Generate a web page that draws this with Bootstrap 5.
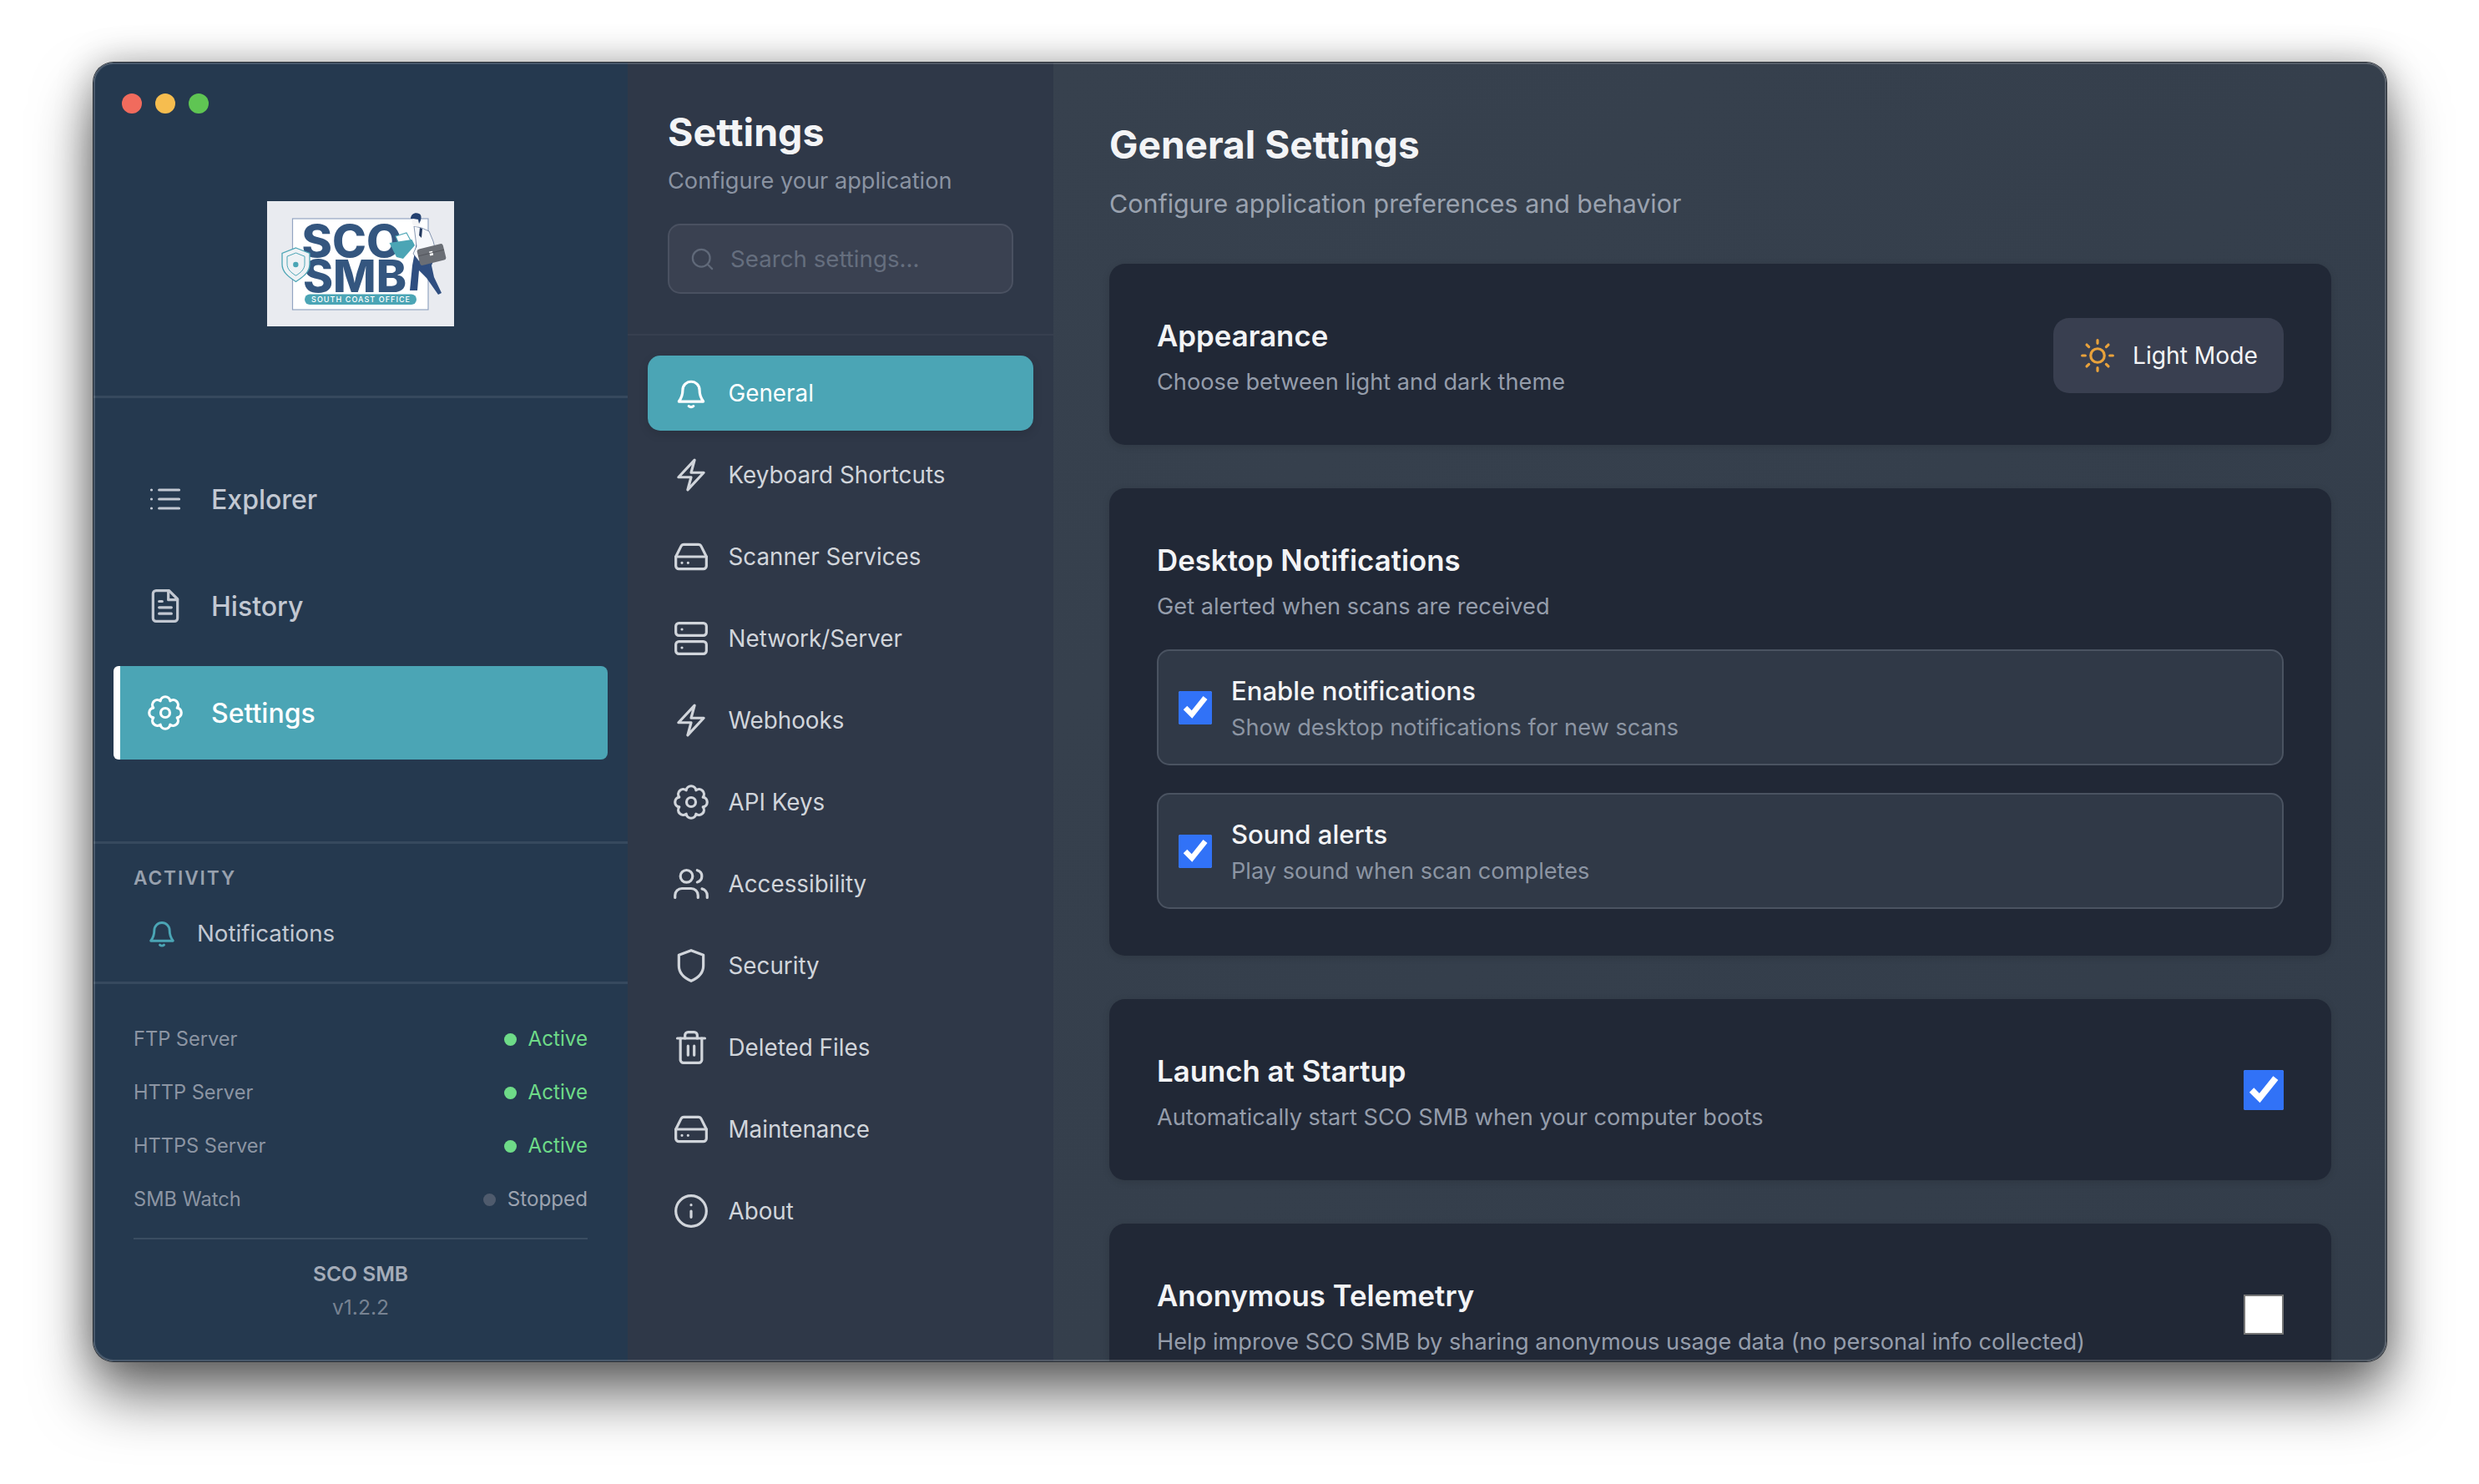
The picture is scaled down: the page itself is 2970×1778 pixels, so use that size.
<!DOCTYPE html>
<html lang="en">
<head>
<meta charset="utf-8">
<title>SCO SMB Settings</title>
<link href="https://cdn.jsdelivr.net/npm/bootstrap@5.3.0/dist/css/bootstrap.min.css" rel="stylesheet">
<style>
html,body{height:100%;}
body{background:#fff;font-family:"Inter","Liberation Sans",sans-serif;padding:75px 111px 147px 112px;overflow:hidden;}
.app-win{height:1556px;border-radius:24px;position:relative;overflow:hidden;box-shadow:0 0 0 1px #2a2f36,0 40px 70px rgba(0,0,0,.58),0 0 44px rgba(0,0,0,.28);}
.app-win::after{content:"";position:absolute;inset:0;border-radius:24px;border:2px solid rgba(255,255,255,.16);pointer-events:none;}
.ico{fill:none;stroke:currentColor;stroke-width:1.75;stroke-linecap:round;stroke-linejoin:round;flex:none;}
/* left sidebar */
.side-a{width:640px;flex:none;background:#25394f;color:#c2c8d2;}
.side-head{height:402px;border-bottom:3px solid #36495e;}
.lights{padding:37px 0 0 34px;gap:16px;}
.lights span{width:24px;height:24px;border-radius:50%;display:block;}
.lg-box{width:224px;height:150px;margin:105px auto 0;display:block;}
.main-links{padding:65px 24px 0;gap:16px;}
.main-link{height:112px;padding-left:40px;padding-top:2px;gap:33px;font-size:32px;font-weight:500;color:#c2c8d2;text-decoration:none;}
.main-link .ico{width:44px;height:44px;margin-top:-2px;}
.main-link.on{background:#4ba5b5;color:#fff;border-left:8px solid #fff;padding-left:32px;border-radius:6px 8px 8px 6px;}
.activity{height:171px;border-top:3px solid #36495e;border-bottom:3px solid #36495e;padding:23px 48px 0;}
.act-label{font-size:22.7px;line-height:36px;font-weight:600;letter-spacing:1.9px;color:#98a1ae;}
.act-link{gap:22px;padding:26px 0 0 14px;font-size:27.7px;line-height:44px;color:#c2c8d2;}
.act-link .ico{width:40px;height:40px;color:#4ba5b5;}
.status{height:452px;padding:49px 48px 0;}
.st-row{height:34px;margin-bottom:30px;font-size:23.6px;color:#8c95a3;}
.st-val{gap:14px;font-size:24.2px;}
.st-val i{width:15px;height:15px;border-radius:50%;display:block;background:#6edb88;}
.st-val.ok{color:#6edb88;}
.st-val.off{color:#9ca3af;}
.st-val.off i{background:#4f5b6d;}
.st-rule{border-top:2px solid #3a4d62;margin-top:-1px;padding-top:23px;text-align:center;}
.st-name{font-size:24.6px;line-height:36px;font-weight:600;color:#a4acb9;}
.st-ver{font-size:24.6px;line-height:36px;margin-top:4px;color:#778292;}
/* settings column */
.side-b{width:510px;flex:none;background:#2f3848;}
.b-head{height:327px;padding:0 48px;border-bottom:2px solid #373f4f;}
.b-title{font-size:46.5px;line-height:60px;font-weight:700;color:#f3f4f6;margin:53px 0 0;}
.b-sub{font-size:27.2px;line-height:40px;color:#8a93a2;margin:9px 0 0;}
.b-search{height:84px;margin-top:31px;border:2px solid #4a5161;background:#3a4151;border-radius:15px;padding-left:24px;gap:18px;color:#606979;}
.b-search .ico{width:31px;height:31px;}
.b-search input{background:transparent;border:0;outline:0;width:300px;font-size:27.7px;color:#d1d5db;padding:0;margin-top:1px;}
.b-search input::placeholder{color:#656e7e;opacity:1;}
.b-links{padding:24px 24px 0;gap:8px;}
.b-link{height:90px;border-radius:15px;padding-left:30px;padding-top:2px;gap:22.500px;font-size:27.8px;font-weight:400;color:#d1d5db;text-decoration:none;}
.b-link .ico{width:44px;height:44px;margin-top:-2px;}
.b-link.on{background:#4ba5b5;color:#fff;box-shadow:0 4px 12px rgba(0,0,0,.12);}
/* main */
.pane{background:linear-gradient(135deg,#37414e,#333d4a);padding:0 66px 0 67px;overflow:hidden;min-width:0;}
.pane-title{font-size:46px;line-height:64px;font-weight:700;color:#f3f4f6;margin:66px 0 0;}
.pane-sub{font-size:30.4px;line-height:44px;color:#9aa2af;margin:17px 0 0;}
.block{background:#212836;border-radius:19px;padding:59px 57px 55px;margin-top:52px;box-shadow:0 2px 10px rgba(0,0,0,.12);flex:none;}
.block.first{margin-top:50px;}
.block.tall{padding-bottom:56px;}
.bl-title{font-size:34.8px;line-height:54px;font-weight:600;color:#f3f4f6;margin:0;}
.bl-sub{font-size:27.2px;line-height:41px;color:#959dab;margin:8px 0 0;}
.tgl{height:90px;width:276px;background:#393f50;border:0;border-radius:19px;color:#f3f4f6;font-size:28.2px;gap:20px;padding:1px 0 0 31px;flex:none;margin-top:-2px;}
.tgl .ico{width:44px;height:44px;color:#e9a23b;}
.opts{margin-top:31px;gap:33px;}
.opt{height:139px;border:2px solid #4a5361;background:#303947;border-radius:15px;padding:0 23px 0 24px;gap:23px;}
.opt>span{padding-top:2px;}
.opt-t{font-size:31.1px;line-height:42px;font-weight:500;color:#f3f4f6;}
.opt-s{font-size:27.2px;line-height:38px;margin-top:4px;color:#8c95a3;}
.opt input,.block>input{accent-color:#3172f7;margin:0;flex:none;}
.opt input{width:40px;height:40px;}
.block>input{width:48px;height:48px;margin-top:-4px;}
.block>input:not(:checked){outline:2px solid #767676;outline-offset:-2px;border-radius:3px;}
</style>
</head>
<body>
<div class="app-win d-flex">
  <aside class="side-a d-flex flex-column">
    <div class="side-head">
      <div class="lights d-flex"><span style="background:#f16b5d"></span><span style="background:#f6bd4f"></span><span style="background:#5fc553"></span></div>
      <svg class="lg-box" viewBox="0 0 224 150" role="img" aria-label="SCO SMB logo">
        <rect width="224" height="150" fill="#e9ebf0"/>
        <rect x="30.5" y="21" width="162.5" height="109" fill="#fff" stroke="#93a5c2" stroke-width="1.2"/>
        <text x="41.5" y="66.5" font-family="Inter" font-weight="800" font-size="53" fill="#34567f" textLength="120" lengthAdjust="spacingAndGlyphs">SCO</text>
        <text x="43" y="108.5" font-family="Inter" font-weight="800" font-size="53" fill="#34567f" textLength="124" lengthAdjust="spacingAndGlyphs">SMB</text>
        <rect x="45" y="111.5" width="134" height="12.5" rx="6.2" fill="#4ba5b5"/>
        <text x="53" y="121.3" font-family="Inter" font-weight="500" font-size="9" fill="#fff" textLength="118" lengthAdjust="spacing">SOUTH COAST OFFICE</text>
        <path d="M34.5 56l16.5 6.5v13c0 9-6.5 14.500-16.500 21-10-6.500-16.500-12-16.500-21v-13z" fill="#eef2f5" stroke="#4ba5b5" stroke-width="1.300"/>
        <path d="M34.500 62l10.500 4.200v9c0 6-4 10-10.500 14-6.500-4-10.500-8-10.500-14v-9z" fill="none" stroke="#4ba5b5" stroke-width="1"/>
        <circle cx="34.300" cy="76" r="3.200" fill="#4ba5b5"/>
        <path d="M179 50l12-7 7 6 4 16-5 12 3 14 9 19-4 2-14-20-9-9-2 24h-9l3-30z" fill="#2f4e80"/>
        <path d="M176 30l9 2 9 4 5 12 3 12-10 5-10 7-7-9 4-9z" fill="#f6f8fb" stroke="#3a567f" stroke-width=".6"/>
        <path d="M183 32l3 1-1 11-3-3z" fill="#23395f"/>
        <circle cx="179" cy="25" r="5.500" fill="#f5f5f6"/>
        <path d="M172 21c0-5 5-8 10-6 3 1 3 5 2 8l-2 4-1-5-6-1z" fill="#23406f"/>
        <path d="M154 42l13-4 6 11-14 5z" fill="#fff" stroke="#4ba5b5" stroke-width="1.100"/>
        <path d="M146.500 50l27-4 3.500 7-14 16-8-2z" fill="#4ba5b5"/>
        <g transform="rotate(-14 197 64)"><rect x="181" y="54" width="32" height="20" rx="3" fill="#6a6e75"/><rect x="195" y="60" width="4" height="5" fill="#fff"/><path d="M181 62h32" stroke="#4f5258" stroke-width=".8"/></g>
      </svg>
    </div>
    <div class="main-links d-flex flex-column">
      <a class="main-link d-flex align-items-center" href="#"><svg class="ico" viewBox="0 0 24 24"><path d="M8 6h13M8 12h13M8 18h13M3 6h.01M3 12h.01M3 18h.01"/></svg>Explorer</a>
      <a class="main-link d-flex align-items-center" href="#"><svg class="ico" viewBox="0 0 24 24"><path d="M14.500 2H6a2 2 0 0 0-2 2v16a2 2 0 0 0 2 2h12a2 2 0 0 0 2-2V7.500z"/><path d="M14 2v6h6" /><path d="M16 13H8M16 17H8M10 9H8"/></svg>History</a>
      <a class="main-link on d-flex align-items-center" href="#"><svg class="ico" viewBox="0 0 24 24"><path d="M8.790 4.240A3.250 3.250 0 0 1 15.210 4.240A3.250 3.250 0 0 1 19.760 8.790A3.250 3.250 0 0 1 19.760 15.210A3.250 3.250 0 0 1 15.210 19.760A3.250 3.250 0 0 1 8.790 19.760A3.250 3.250 0 0 1 4.240 15.210A3.250 3.250 0 0 1 4.240 8.790A3.250 3.250 0 0 1 8.790 4.240Z"/><circle cx="12" cy="12" r="3"/></svg>Settings</a>
    </div>
    <div class="activity mt-auto">
      <div class="act-label">ACTIVITY</div>
      <div class="act-link d-flex align-items-center"><svg class="ico" viewBox="0 0 24 24"><path d="M6.500 10a5.500 5.500 0 0 1 11 0c0 3.500 1 5.500 2.500 7.500H4c1.500-2 2.500-4 2.500-7.500z"/><path d="M10.500 20.500c.8.7 2.200.7 3 0"/></svg>Notifications</div>
    </div>
    <div class="status">
      <div class="st-row d-flex justify-content-between align-items-center"><span>FTP Server</span><span class="st-val ok d-flex align-items-center"><i></i>Active</span></div>
      <div class="st-row d-flex justify-content-between align-items-center"><span>HTTP Server</span><span class="st-val ok d-flex align-items-center"><i></i>Active</span></div>
      <div class="st-row d-flex justify-content-between align-items-center"><span>HTTPS Server</span><span class="st-val ok d-flex align-items-center"><i></i>Active</span></div>
      <div class="st-row d-flex justify-content-between align-items-center"><span>SMB Watch</span><span class="st-val off d-flex align-items-center"><i></i>Stopped</span></div>
      <div class="st-rule"><div class="st-name">SCO SMB</div><div class="st-ver">v1.2.2</div></div>
    </div>
  </aside>

  <aside class="side-b d-flex flex-column">
    <div class="b-head">
      <h2 class="b-title">Settings</h2>
      <p class="b-sub">Configure your application</p>
      <div class="b-search d-flex align-items-center"><svg class="ico" viewBox="0 0 24 24"><circle cx="11" cy="11" r="8"/><path d="M21 21l-4.350-4.350"/></svg><input type="text" placeholder="Search settings..."></div>
    </div>
    <div class="b-links d-flex flex-column">
      <a class="b-link on d-flex align-items-center" href="#"><svg class="ico" viewBox="0 0 24 24"><path d="M6.500 10a5.500 5.500 0 0 1 11 0c0 3.500 1 5.500 2.500 7.500H4c1.500-2 2.500-4 2.500-7.500z"/><path d="M10.500 20.500c.8.7 2.200.7 3 0"/></svg>General</a>
      <a class="b-link d-flex align-items-center" href="#"><svg class="ico" viewBox="0 0 24 24"><path d="M3.750 13.500l10.500-11.250L12 10.500h8.250L9.750 21.750 12 13.500H3.750z"/></svg>Keyboard Shortcuts</a>
      <a class="b-link d-flex align-items-center" href="#"><svg class="ico" viewBox="0 0 24 24"><path d="M22 12H2"/><path d="M5.450 5.110 2 12v6a2 2 0 0 0 2 2h16a2 2 0 0 0 2-2v-6l-3.450-6.890A2 2 0 0 0 16.760 4H7.240a2 2 0 0 0-1.790 1.110z"/><path d="M6 16h.01M10 16h.01"/></svg>Scanner Services</a>
      <a class="b-link d-flex align-items-center" href="#"><svg class="ico" viewBox="0 0 24 24"><rect x="2" y="2" width="20" height="8" rx="2"/><rect x="2" y="14" width="20" height="8" rx="2"/><path d="M6 6h.01M6 18h.01"/></svg>Network/Server</a>
      <a class="b-link d-flex align-items-center" href="#"><svg class="ico" viewBox="0 0 24 24"><path d="M3.750 13.500l10.500-11.250L12 10.500h8.250L9.750 21.750 12 13.500H3.750z"/></svg>Webhooks</a>
      <a class="b-link d-flex align-items-center" href="#"><svg class="ico" viewBox="0 0 24 24"><path d="M8.790 4.240A3.250 3.250 0 0 1 15.210 4.240A3.250 3.250 0 0 1 19.760 8.790A3.250 3.250 0 0 1 19.760 15.210A3.250 3.250 0 0 1 15.210 19.760A3.250 3.250 0 0 1 8.790 19.760A3.250 3.250 0 0 1 4.240 15.210A3.250 3.250 0 0 1 4.240 8.790A3.250 3.250 0 0 1 8.790 4.240Z"/><circle cx="12" cy="12" r="3"/></svg>API Keys</a>
      <a class="b-link d-flex align-items-center" href="#"><svg class="ico" viewBox="0 0 24 24"><path d="M1.500 21v-1.500A4.500 4.500 0 0 1 6 15h6a4.500 4.500 0 0 1 4.500 4.500V21"/><circle cx="9" cy="7" r="4"/><path d="M22.500 21v-1.500a4.500 4.500 0 0 0-3.400-4.300"/><path d="M16 3.130a4 4 0 0 1 0 7.750"/></svg>Accessibility</a>
      <a class="b-link d-flex align-items-center" href="#"><svg class="ico" viewBox="0 0 24 24"><path d="M12 2l8 3v7c0 4.600-3.200 7.900-8 10-4.800-2.100-8-5.400-8-10V5z"/></svg>Security</a>
      <a class="b-link d-flex align-items-center" href="#"><svg class="ico" viewBox="0 0 24 24"><path d="M3 6h18"/><path d="M19 6v14a2 2 0 0 1-2 2H7a2 2 0 0 1-2-2V6"/><path d="M8 6V4a2 2 0 0 1 2-2h4a2 2 0 0 1 2 2v2"/><path d="M10 11v6M14 11v6"/></svg>Deleted Files</a>
      <a class="b-link d-flex align-items-center" href="#"><svg class="ico" viewBox="0 0 24 24"><path d="M22 12H2"/><path d="M5.450 5.110 2 12v6a2 2 0 0 0 2 2h16a2 2 0 0 0 2-2v-6l-3.450-6.890A2 2 0 0 0 16.760 4H7.240a2 2 0 0 0-1.790 1.110z"/><path d="M6 16h.01M10 16h.01"/></svg>Maintenance</a>
      <a class="b-link d-flex align-items-center" href="#"><svg class="ico" viewBox="0 0 24 24"><circle cx="12" cy="12" r="10"/><path d="M12 16v-4M12 8h.01"/></svg>About</a>
    </div>
  </aside>

  <main class="pane flex-grow-1 d-flex flex-column">
    <h1 class="pane-title">General Settings</h1>
    <p class="pane-sub">Configure application preferences and behavior</p>

    <section class="block first d-flex align-items-center justify-content-between">
      <div><h3 class="bl-title">Appearance</h3><p class="bl-sub">Choose between light and dark theme</p></div>
      <button class="tgl d-flex align-items-center" type="button"><svg class="ico" viewBox="0 0 24 24"><circle cx="12" cy="12" r="4.500"/><path d="M12 2v2M12 20v2M4.930 4.930l1.410 1.410M17.660 17.660l1.410 1.410M2 12h2M20 12h2M6.340 17.660l-1.410 1.410M19.070 4.930l-1.410 1.410"/></svg>Light Mode</button>
    </section>

    <section class="block tall">
      <h3 class="bl-title">Desktop Notifications</h3>
      <p class="bl-sub">Get alerted when scans are received</p>
      <div class="opts d-flex flex-column">
        <label class="opt d-flex align-items-center"><input type="checkbox" checked><span><div class="opt-t">Enable notifications</div><div class="opt-s">Show desktop notifications for new scans</div></span></label>
        <label class="opt d-flex align-items-center"><input type="checkbox" checked><span><div class="opt-t">Sound alerts</div><div class="opt-s">Play sound when scan completes</div></span></label>
      </div>
    </section>

    <section class="block d-flex align-items-center justify-content-between">
      <div><h3 class="bl-title">Launch at Startup</h3><p class="bl-sub">Automatically start SCO SMB when your computer boots</p></div>
      <input type="checkbox" checked>
    </section>

    <section class="block d-flex align-items-center justify-content-between">
      <div><h3 class="bl-title">Anonymous Telemetry</h3><p class="bl-sub">Help improve SCO SMB by sharing anonymous usage data (no personal info collected)</p></div>
      <input type="checkbox">
    </section>
  </main>
</div>
<script src="https://cdn.jsdelivr.net/npm/bootstrap@5.3.0/dist/js/bootstrap.bundle.min.js"></script>
</body>
</html>
